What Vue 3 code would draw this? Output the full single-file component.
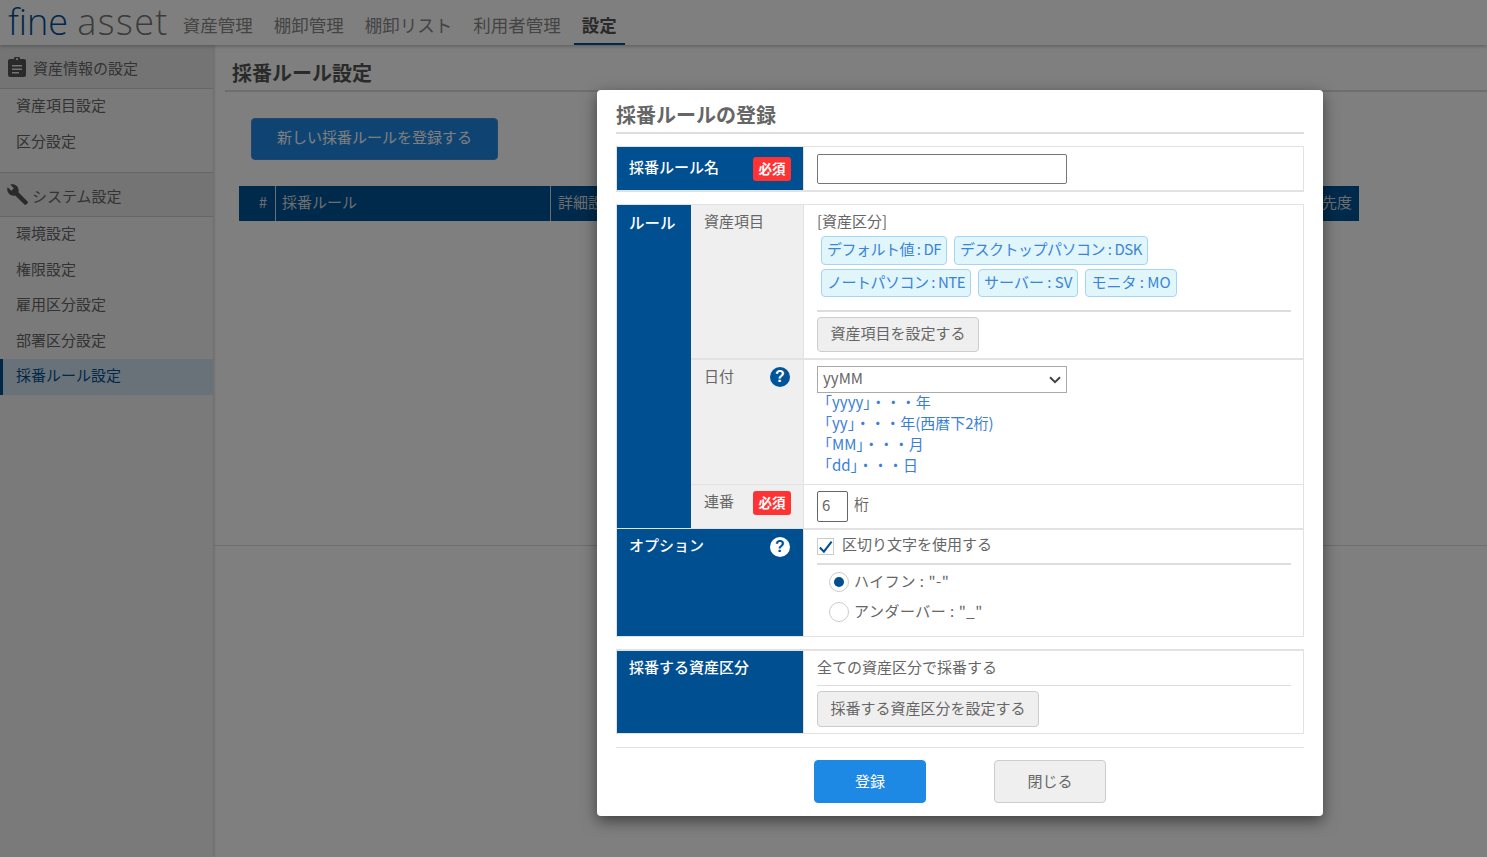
<template>
  <div class="page">
    <header class="topbar">
      <div class="logo"><span class="logo-a">fine</span> <span class="logo-b">asset</span></div>
      <nav class="nav">
        <a v-for="item in navItems" :key="item" class="nav-item">{{ item }}</a>
        <a class="nav-item active">設定</a>
      </nav>
    </header>

    <div class="body">
      <aside class="sidebar">
        <div class="side-head">
          <svg class="side-icon" viewBox="0 0 18 20" width="18" height="20">
            <path fill="#555" fill-rule="evenodd" d="M2 2h4a3 3 0 0 1 6 0h4a2 2 0 0 1 2 2v14a2 2 0 0 1-2 2H2a2 2 0 0 1-2-2V4a2 2 0 0 1 2-2zm2 6v1.6h10V8zm0 3.5v1.6h10v-1.6zm0 3.5v1.6h7V15zM9 1a1.1 1.1 0 1 0 0 2.2A1.1 1.1 0 0 0 9 1z"/>
          </svg>
          資産情報の設定
        </div>
        <ul class="side-list first">
          <li>資産項目設定</li>
          <li>区分設定</li>
        </ul>
        <div class="side-head">
          <svg class="side-icon wrench" viewBox="0 0 22 22" width="22" height="22">
            <path fill="#555" d="M20.6 17.4 11.4 8.2C12 6 11.5 3.6 9.8 2 8 .3 5.500-.2 3.300.7l3.500 3.500-2.500 2.500L.7 3.300C-.2 5.500.3 8 2.100 9.800c1.700 1.700 4 2.200 6.100 1.600l9.200 9.200c.5.500 1.300.5 1.800 0l1.400-1.400c.5-.5.5-1.300 0-1.800z"/>
          </svg>
          システム設定
        </div>
        <ul class="side-list">
          <li v-for="item in systemItems" :key="item">{{ item }}</li>
          <li class="current">採番ルール設定</li>
        </ul>
      </aside>

      <main class="main">
        <h1 class="page-title">採番ルール設定</h1>
        <button class="btn-new">新しい採番ルールを登録する</button>
        <div class="list-head">
          <span class="col-no">#</span>
          <span class="col-rule">採番ルール</span>
          <span class="col-detail">詳細設定</span>
          <span class="col-priority">優先度</span>
        </div>
        <div class="list-rule"></div>
      </main>
    </div>

    <div class="overlay"></div>

    <div class="modal">
      <h2 class="modal-title">採番ルールの登録</h2>

      <section class="form-table name-table">
        <div class="th name-th">
          <span>採番ルール名</span>
          <span class="req">必須</span>
        </div>
        <div class="td name-td"><input class="text-input" type="text"></div>
      </section>

      <section class="form-table rule-table">
        <div class="th rule-th">ルール</div>

        <div class="sub-th row-a">資産項目</div>
        <div class="td row-a cell-items">
          <div class="group-name">[資産区分]</div>
          <div class="tags">
            <span v-for="(tag, i) in tags" :key="tag" class="tag" :class="{ loose: i > 2 }">{{ tag }}</span>
          </div>
          <div class="divider"></div>
          <button class="btn-gray">資産項目を設定する</button>
        </div>

        <div class="sub-th row-b">
          <span class="sub-label">日付</span>
          <span class="help">?</span>
        </div>
        <div class="td row-b cell-date">
          <div class="select-wrap">
            <select class="select"><option>yyMM</option></select>
            <svg class="chevron" viewBox="0 0 12 8" width="12" height="8">
              <path d="M1 1.200 6 6.200 11 1.200" fill="none" stroke="#444" stroke-width="2"/>
            </svg>
          </div>
          <div class="hints">
            <div v-for="hint in hints" :key="hint">{{ hint }}</div>
          </div>
        </div>

        <div class="sub-th row-c">
          <span>連番</span>
          <span class="req">必須</span>
        </div>
        <div class="td row-c cell-seq">
          <input class="num-input" type="text" value="6">
          <span>桁</span>
        </div>

        <div class="th option-th">
          <span class="option-label">オプション</span>
          <span class="help light">?</span>
        </div>
        <div class="td cell-option">
          <label class="check-row">
            <span class="check">
              <svg viewBox="0 0 16 16" width="16" height="16"><path d="M2 8.500 6.300 13 14.500 2.200" fill="none" stroke="#004f91" stroke-width="2.200"/></svg>
            </span>
            <span>区切り文字を使用する</span>
          </label>
          <div class="divider option-divider"></div>
          <div class="radio-row"><span class="radio on"></span><span class="radio-text">ハイフン : "-"</span></div>
          <div class="radio-row"><span class="radio"></span><span class="radio-text">アンダーバー : "_"</span></div>
        </div>
      </section>

      <section class="form-table target-table">
        <div class="th target-th">採番する資産区分</div>
        <div class="td cell-target">
          <div class="target-text">全ての資産区分で採番する</div>
          <button class="btn-gray tall">採番する資産区分を設定する</button>
        </div>
      </section>

      <footer class="modal-foot">
        <button class="btn-save">登録</button>
        <button class="btn-close">閉じる</button>
      </footer>
    </div>
  </div>
</template>

<script setup>
const navItems = ['資産管理', '棚卸管理', '棚卸リスト', '利用者管理']
const systemItems = ['環境設定', '権限設定', '雇用区分設定', '部署区分設定']
const tags = [
  'デフォルト値 : DF',
  'デスクトップパソコン : DSK',
  'ノートパソコン : NTE',
  'サーバー : SV',
  'モニタ : MO'
]
const hints = ['「yyyy」・・・年', '「yy」・・・年(西暦下2桁)', '「MM」・・・月', '「dd」・・・日']
</script>

<style>
html, body {
  margin: 0;
  height: 100%;
  overflow: hidden;
}
</style>

<style scoped>
* {
  box-sizing: border-box;
}

.page {
  position: relative;
  height: 857px;
  background: #fff;
  color: #666;
  font-family: "Noto Sans CJK JP", "Noto Sans", sans-serif;
  font-size: 15px;
  overflow: hidden;
}

.topbar {
  display: flex;
  align-items: flex-end;
  height: 45px;
  padding-left: 8px;
  background: #fff;
  box-shadow: 0 1px 4px rgba(0, 0, 0, 0.3);
  position: relative;
}

.logo {
  flex: none;
  margin-right: 6px;
  padding-bottom: 2px;
  font-family: "Open Sans", sans-serif;
  font-weight: 300;
  font-size: 36px;
  line-height: 43px;
  white-space: nowrap;
}

.logo-a {
  color: #004f91;
}

.logo-b {
  color: #777;
  letter-spacing: 1.400px;
}

.nav {
  display: flex;
  gap: 5px;
}

.nav-item {
  height: 45px;
  padding: 0 8px;
  font-size: 17.500px;
  line-height: 49px;
  color: #888;
  white-space: nowrap;
}

.nav-item.active {
  color: #555;
  font-weight: 700;
  border-bottom: 2px solid #005499;
}

.body {
  display: flex;
  height: 812px;
}

.sidebar {
  width: 213px;
  flex-shrink: 0;
  background: #f5f5f5;
  box-shadow: 1px 0 3px rgba(0, 0, 0, 0.2);
}

.side-head {
  display: flex;
  align-items: center;
  height: 44px;
  padding: 2px 0 0 8px;
  gap: 7px;
  background: #e9e9e9;
  border-bottom: 1px solid #ccc;
  color: #666;
  font-size: 15px;
}

.side-icon {
  margin-top: -2px;
}

.side-icon.wrench {
  margin-left: -1px;
  margin-right: -4px;
}

.side-list {
  list-style: none;
  margin: 0;
  padding: 0;
}

.side-list.first {
  height: 84px;
  border-bottom: 1px solid #ccc;
}

.side-list li {
  height: 35.500px;
  line-height: 31px;
  padding-left: 16px;
  color: #666;
}

.side-list li.current {
  background: #d3e5f3;
  border-left: 3px solid #004f91;
  padding-left: 13px;
  line-height: 31px;
  color: #004f91;
}

.main {
  flex: 1;
  padding: 0 0 0 12px;
  position: relative;
}

.page-title {
  margin: 0;
  height: 47px;
  padding: 13px 0 0 7px;
  font-size: 20px;
  line-height: 30px;
  font-weight: 700;
  color: #555;
  border-bottom: 2px solid #ddd;
}

.btn-new {
  display: block;
  margin: 26px 0 0 26px;
  width: 247px;
  height: 42px;
  padding: 0 0 6px;
  background: #1e88e5;
  border: 1px solid #3d8fd6;
  border-radius: 4px;
  color: #fff;
  font-family: inherit;
  font-size: 15px;
}

.list-head {
  display: flex;
  margin: 26px 0 0 14px;
  width: 1120px;
  height: 35px;
  background: #005499;
  color: #ddd;
  line-height: 32px;
  font-size: 15px;
}

.list-head span {
  padding-left: 7px;
  border-right: 1px solid #ddd;
  white-space: nowrap;
}

.col-no {
  width: 37px;
  text-align: right;
  padding-right: 8px;
}

.col-rule {
  width: 275px;
  padding-left: 6px !important;
}

.col-detail {
  width: 764px;
}

.col-priority {
  width: 44px;
  border-right: 0 !important;
  padding-left: 0 !important;
  text-align: right;
  padding-right: 7px;
  direction: rtl;
}

.list-rule {
  margin-top: 324px;
  margin-left: -12px;
  border-top: 1px solid #ddd;
}

.overlay {
  position: absolute;
  inset: 0;
  background: rgba(0, 0, 0, 0.5);
}

.modal {
  position: absolute;
  left: 597px;
  top: 90px;
  width: 726px;
  height: 726px;
  padding: 0 19px;
  background: #fff;
  border-radius: 4px;
  box-shadow: 0 5px 15px rgba(0, 0, 0, 0.5);
}

.modal-title {
  margin: 0;
  height: 44px;
  padding-top: 10px;
  font-size: 20px;
  line-height: 30px;
  font-weight: 700;
  color: #666;
  border-bottom: 2px solid #ddd;
}

.form-table {
  display: grid;
  border: 1px solid #e2e2e2;
}

.th {
  background: #004f91;
  color: #fff;
  font-weight: 500;
  padding: 8px 12px;
}

.td {
  background: #fff;
  padding: 0 12px 0 13px;
  border-left: 1px solid #e2e2e2;
}

.name-table {
  margin-top: 12px;
  height: 46px;
  border-bottom-width: 2px;
  grid-template-columns: 186px 1fr;
}

.name-th {
  display: flex;
  justify-content: space-between;
  align-items: flex-start;
  padding: 10px 12px 0;
  line-height: 20px;
}

.req {
  display: inline-block;
  width: 38px;
  height: 24px;
  background: #ff3333;
  border-radius: 3px;
  color: #fff;
  font-size: 13.500px;
  font-weight: 700;
  line-height: 22px;
  text-align: center;
  white-space: nowrap;
}

.name-td {
  padding-top: 7px;
}

.text-input {
  display: block;
  width: 250px;
  height: 30px;
  border: 1px solid #767676;
  border-radius: 2px;
  background: #fff;
}

.rule-table {
  margin-top: 12px;
  grid-template-columns: 74px 112px 1fr;
  grid-template-rows: 155px 125px 44px 107px;
}

.rule-th {
  grid-row: 1 / 4;
  line-height: 18px;
  font-size: 15.500px;
  border-bottom: 1px solid #e2e2e2;
}

.sub-th {
  display: flex;
  justify-content: space-between;
  align-items: flex-start;
  background: #efefef;
  padding: 6px 13px 0 13px;
  color: #666;
  line-height: 20px;
}

.row-a {
  border-bottom: 2px solid #e2e2e2;
}

.row-b,
.row-c {
  border-bottom: 1px solid #e2e2e2;
}

.sub-th.row-b {
  padding-top: 7px;
}

.sub-th.row-c {
  padding-right: 12px;
}

.sub-label {
  line-height: 18px;
}

.cell-items {
  padding-top: 5px;
}

.group-name {
  line-height: 22px;
}

.tags {
  display: flex;
  flex-wrap: wrap;
  gap: 4px 7px;
  padding: 4px 0 0 4px;
}

.tag {
  height: 28.500px;
  padding: 0 5px;
  background: #e0f6fa;
  border: 1px solid #a4d5f5;
  border-radius: 4px;
  color: #3b84d8;
  line-height: 24px;
  letter-spacing: -0.500px;
  white-space: nowrap;
}

.tag.loose {
  letter-spacing: 0;
}

.divider {
  height: 2px;
  background: #ddd;
  margin: 13px 0 5px;
}

.btn-gray {
  display: block;
  height: 35px;
  padding: 0 12.500px 4px;
  background: #efefef;
  border: 1px solid #ccc;
  border-radius: 4px;
  color: #666;
  font-family: inherit;
  font-size: 15px;
}

.btn-gray.tall {
  height: 36px;
}

.cell-date {
  padding-top: 6px;
}

.select-wrap {
  position: relative;
  width: 250px;
}

.select {
  display: block;
  width: 250px;
  height: 27px;
  padding: 0 0 4px 5px;
  appearance: none;
  background: #fff;
  border: 1px solid #aaa;
  border-radius: 0;
  color: #666;
  font-family: inherit;
  font-size: 15px;
}

.chevron {
  position: absolute;
  right: 6px;
  top: 10px;
}

.hints {
  margin-top: -2px;
  color: #3b7ed8;
  font-size: 15px;
  line-height: 21px;
}

.help {
  display: inline-block;
  width: 20px;
  height: 20px;
  border-radius: 50%;
  background: #005499;
  color: #fff;
  text-align: center;
  font-family: "Liberation Sans", sans-serif;
  font-size: 16px;
  font-weight: 700;
  line-height: 20px;
}

.help.light {
  background: #fff;
  color: #004f91;
}

.cell-seq {
  display: flex;
  align-items: flex-start;
  gap: 6px;
  padding-top: 6px;
  line-height: 25px;
}

.num-input {
  width: 31px;
  height: 31px;
  padding: 0 4px 4px;
  border: 1px solid #666;
  border-radius: 2px;
  color: #666;
  font-family: inherit;
  font-size: 15px;
}

.option-th {
  grid-column: 1 / 3;
  display: flex;
  justify-content: space-between;
  align-items: flex-start;
  padding: 8px 13px 0 12px;
}

.option-label {
  line-height: 16px;
}

.cell-option {
  padding-top: 6px;
  border-top: 1px solid #e2e2e2;
}

.check-row {
  display: flex;
  align-items: flex-start;
  gap: 8px;
  height: 20px;
  line-height: 16px;
}

.check {
  flex: none;
  width: 17px;
  height: 17px;
  margin-top: 2px;
  border: 1px solid #ccc;
  display: flex;
  align-items: center;
  justify-content: center;
}

.option-divider {
  margin: 7px 0 2px;
}

.radio-row {
  display: flex;
  align-items: center;
  gap: 5px;
  height: 30px;
  padding-left: 12px;
}

.radio {
  position: relative;
  width: 20px;
  height: 20px;
  border: 1px solid #ccc;
  border-radius: 50%;
}

.radio.on::after {
  content: "";
  position: absolute;
  left: 4px;
  top: 4px;
  width: 10px;
  height: 10px;
  border-radius: 50%;
  background: #004f91;
}

.radio-text {
  margin-bottom: 4px;
  letter-spacing: 0.500px;
}

.target-table {
  margin-top: 12px;
  height: 85px;
  border-top-width: 2px;
  grid-template-columns: 186px 1fr;
}

.target-th {
  padding-top: 5px;
  line-height: 22px;
}

.target-text {
  height: 35px;
  line-height: 31px;
  border-bottom: 1px solid #ddd;
  margin-bottom: 5px;
}

.modal-foot {
  display: flex;
  justify-content: center;
  gap: 68px;
  margin-top: 13px;
  padding-top: 12px;
  border-top: 1px solid #e2e2e2;
}

.btn-save,
.btn-close {
  width: 112px;
  height: 43px;
  padding: 0 0 3px;
  border-radius: 4px;
  font-family: inherit;
  font-size: 15px;
}

.btn-save {
  background: #1e88e5;
  border: 1px solid #1e88e5;
  color: #fff;
}

.btn-close {
  background: #efefef;
  border: 1px solid #ccc;
  color: #666;
}
</style>
